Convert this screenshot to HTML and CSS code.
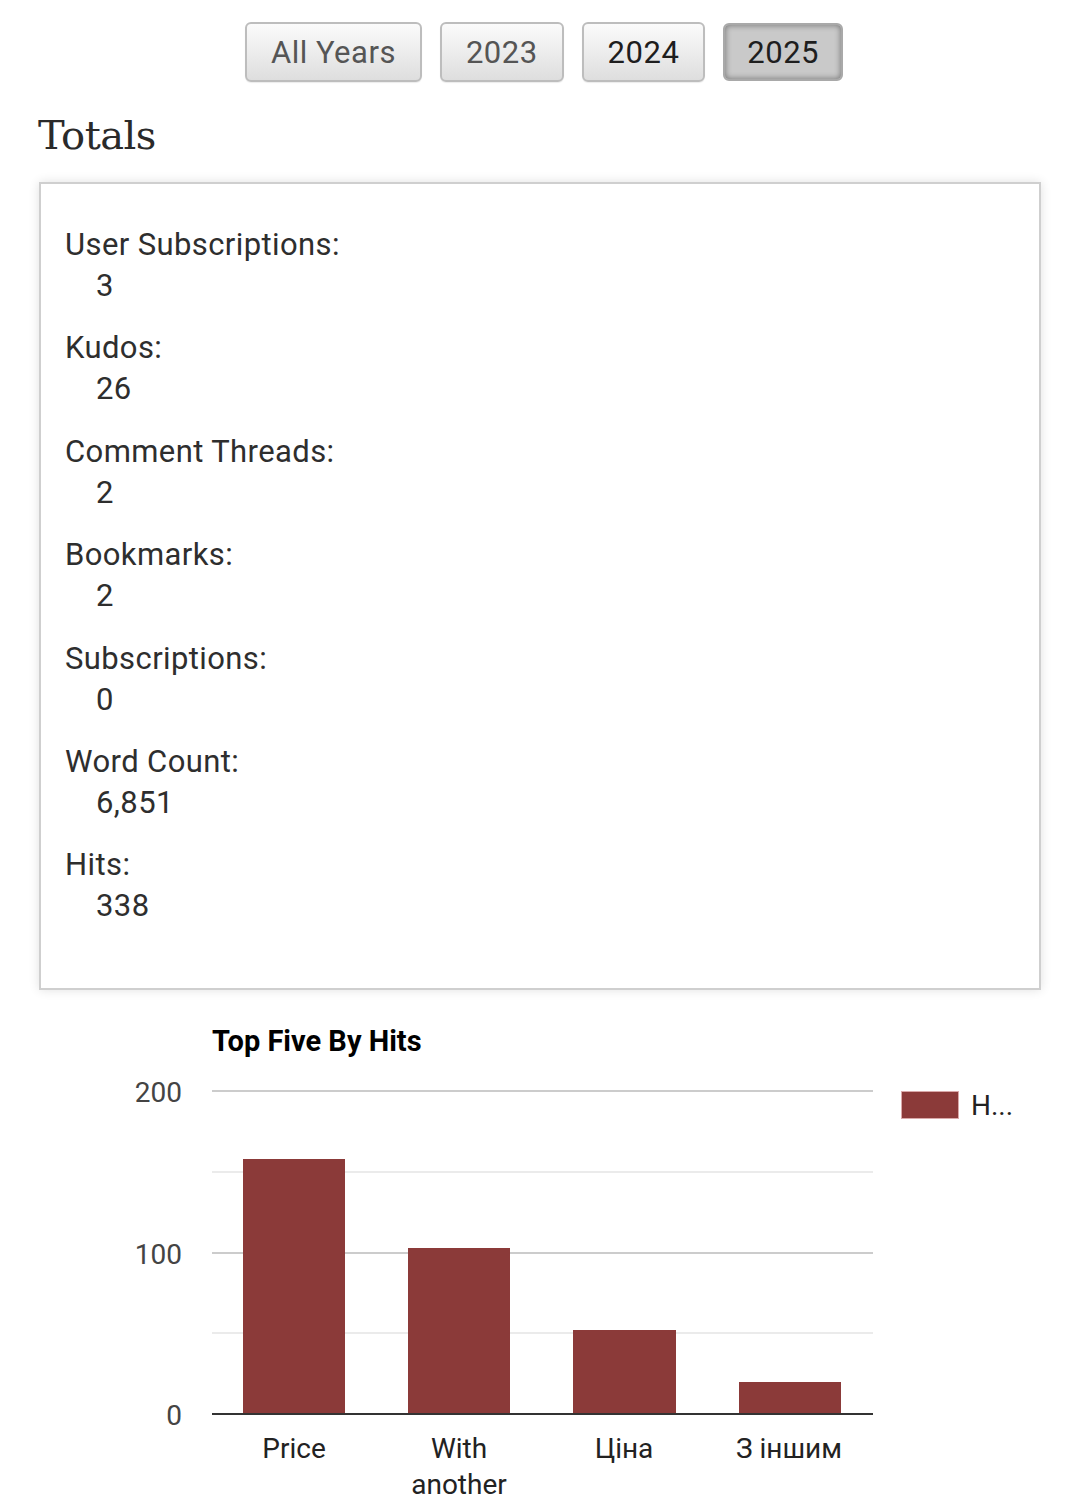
FILE: index.html
```html
<!DOCTYPE html>
<html>
<head>
<meta charset="utf-8">
<link rel="stylesheet" href="styles.css">
</head>
<body>
<nav class="years">
  <button class="yr">All Years</button>
  <button class="yr">2023</button>
  <button class="yr dark">2024</button>
  <button class="yr dark pressed">2025</button>
</nav>
<h2 class="title">Totals</h2>
<dl class="totals">
  <dt>User Subscriptions:</dt><dd>3</dd>
  <dt>Kudos:</dt><dd>26</dd>
  <dt>Comment Threads:</dt><dd>2</dd>
  <dt>Bookmarks:</dt><dd>2</dd>
  <dt>Subscriptions:</dt><dd>0</dd>
  <dt>Word Count:</dt><dd>6,851</dd>
  <dt>Hits:</dt><dd>338</dd>
</dl>
<div class="chart">
<svg class="chart-svg" width="1002" height="516" viewBox="39 996 1002 516" xmlns="http://www.w3.org/2000/svg">
  <text x="212" y="1051" class="ctitle">Top Five By Hits</text>
  <rect x="212" y="1090" width="661" height="2" fill="#cccccc"/>
  <rect x="212" y="1171" width="661" height="2" fill="#ebebeb"/>
  <rect x="212" y="1252" width="661" height="2" fill="#cccccc"/>
  <rect x="212" y="1332" width="661" height="2" fill="#ebebeb"/>
  <text x="182" y="1102" class="axis" text-anchor="end">200</text>
  <text x="182" y="1264" class="axis" text-anchor="end">100</text>
  <text x="182" y="1425" class="axis" text-anchor="end">0</text>
  <rect x="243" y="1159" width="102" height="255" fill="#8b3a39"/>
  <rect x="408" y="1248" width="102" height="166" fill="#8b3a39"/>
  <rect x="573" y="1330" width="103" height="84" fill="#8b3a39"/>
  <rect x="739" y="1382" width="102" height="32" fill="#8b3a39"/>
  <rect x="212" y="1413" width="661" height="2" fill="#333333"/>
  <text x="294" y="1458" class="xl" text-anchor="middle">Price</text>
  <text x="459" y="1458" class="xl" text-anchor="middle">With</text>
  <text x="459" y="1494" class="xl" text-anchor="middle">another</text>
  <text x="624" y="1458" class="xl" text-anchor="middle">Ціна</text>
  <text x="789" y="1458" class="xl" text-anchor="middle">З іншим</text>
  <rect x="901.5" y="1091.5" width="57" height="27" fill="#8b3a39" stroke="#d9a9a9" stroke-width="1"/>
  <text x="971" y="1115" class="xl">H...</text>
</svg>
</div>
</body>
</html>
```
FILE: styles.css
```css
html, body {
  margin: 0;
  padding: 0;
  background: #ffffff;
}
body {
  font-family: Roboto, "Noto Sans", sans-serif;
  color: #2a2a2a;
  padding: 0 39px;
  height: 1512px;
  overflow: hidden;
}
.years {
  display: flex;
  justify-content: center;
  gap: 18px;
  padding-top: 22px;
  margin-left: 8px;
}
.yr {
  height: 60px;
  padding: 0 24px;
  font-family: Roboto, sans-serif;
  font-size: 31px;
  letter-spacing: 0.5px;
  color: #555555;
  border: 2px solid #bdbdbd;
  border-radius: 6px;
  background: linear-gradient(#fbfbfb, #dedede);
  box-shadow: 0 1px 1px rgba(0,0,0,0.08);
}
.yr.dark {
  color: #1e1e1e;
}
.yr.pressed {
  height: 58px;
  margin-top: 1px;
  padding: 0 22px;
  background: #c9c9c9;
  border-color: #a9a9a9;
  box-shadow: inset 0 0 6px rgba(0,0,0,0.45);
}
.title {
  font-family: "DejaVu Serif", "Liberation Serif", serif;
  font-weight: normal;
  font-size: 40px;
  color: #2a2a2a;
  margin: 28px 0 0 -1px;
  line-height: 50px;
  letter-spacing: -0.5px;
}
.totals {
  margin: 22px 0 0 0;
  border: 2px solid #cfcfcf;
  box-shadow: 0 0 10px rgba(0,0,0,0.12);
  padding: 40px 24px 60px 24px;
  font-size: 31px;
  letter-spacing: 0.4px;
  line-height: 41px;
  color: #2e2e2e;
  height: 808px;
  box-sizing: border-box;
}
.totals dt {
  margin: 0;
}
.totals dd {
  margin: 0 0 21.4px 31px;
}
.chart {
  margin-top: 6px;
}
.chart-svg {
  display: block;
}
.ctitle {
  font-family: Roboto, sans-serif;
  font-weight: bold;
  font-size: 29px;
  fill: #000000;
}
.axis {
  font-family: Roboto, sans-serif;
  font-size: 28px;
  fill: #444444;
}
.xl {
  font-family: Roboto, sans-serif;
  font-size: 28px;
  fill: #222222;
}
```
